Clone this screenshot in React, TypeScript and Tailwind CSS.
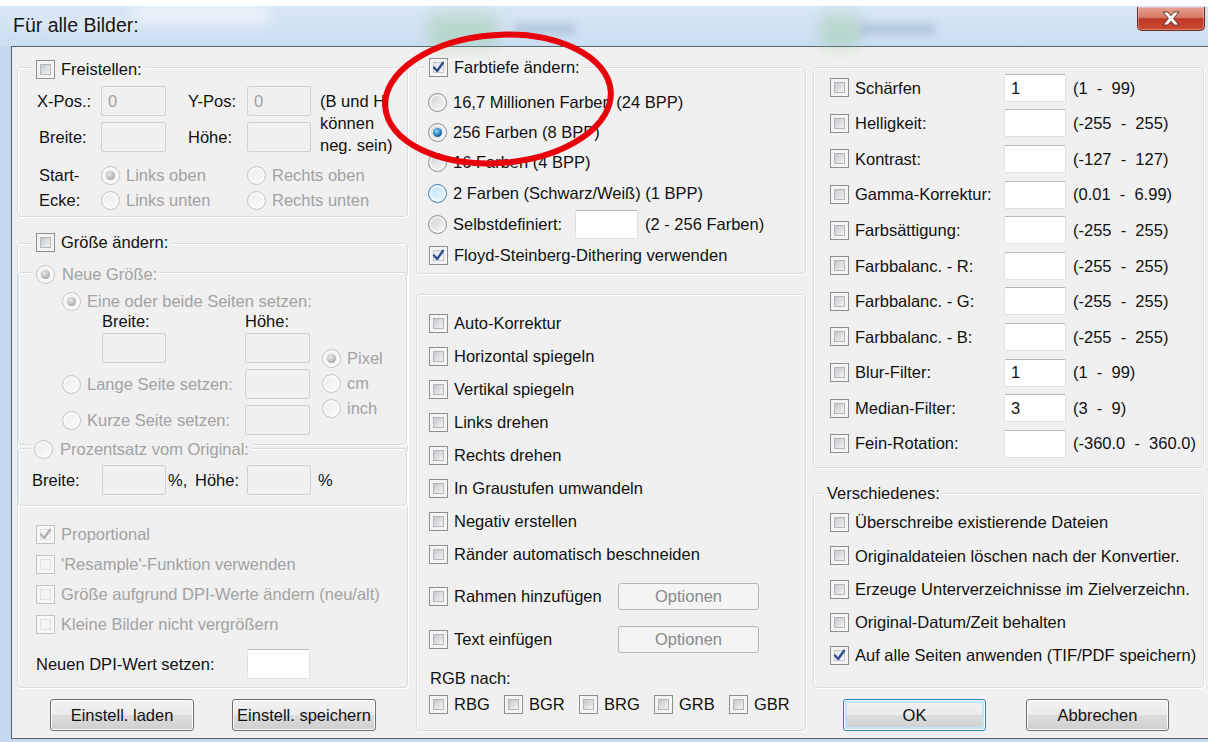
import React from "react";

const dimText = "text-[#a2a2a2]";
const buttonFace = "bg-[linear-gradient(#f2f2f2,#ebebeb_49%,#dddddd_50%,#cfcfcf)]";

function CheckBox({ checked = false, disabled = false }: { checked?: boolean; disabled?: boolean }) {
  const outer = disabled ? "border-[#c4c4c4] bg-[#f7f7f7]" : "border-[#8e8f8f] bg-[#f4f4f4]";
  const inner = disabled
    ? "border-[#e0e0e0] bg-[#f4f4f4]"
    : checked
    ? "border-[#c3c6cb] bg-linear-to-br from-[#e4e5e7] to-[#fbfbfb]"
    : "border-[#b3b6bb] bg-linear-to-br from-[#c4c7cb] to-[#f4f4f4]";
  return (
    <span className={`relative flex h-[19px] w-[19px] shrink-0 border p-[3px] ${outer}`}>
      <span className={`flex-1 border ${inner}`} />
      {checked && (
        <svg viewBox="0 0 19 19" className="absolute -left-px -top-px h-[19px] w-[19px]">
          <path
            d="M5 9.5 L8.2 13 L14 4.8"
            fill="none"
            stroke={disabled ? "#b0b0b0" : "#2f4f93"}
            strokeWidth="2.4"
            strokeLinecap="round"
            strokeLinejoin="round"
          />
        </svg>
      )}
    </span>
  );
}

function Radio({ checked = false, disabled = false, hot = false }: { checked?: boolean; disabled?: boolean; hot?: boolean }) {
  const ring = hot
    ? "border-[#3c7fb1] bg-linear-to-br from-[#bfe3f9] to-[#eef8fe]"
    : disabled
    ? "border-[#c4c4c4] bg-linear-to-br from-[#ececec] to-[#fafafa]"
    : "border-[#8e8f8f] bg-linear-to-br from-[#cfd0d2] to-[#fafafa]";
  const dot = disabled
    ? "bg-[radial-gradient(circle_at_40%_35%,#ececec,#ababab_70%,#8f8f8f)]"
    : "bg-[radial-gradient(circle_at_40%_35%,#9ae0ff,#1d77b4_55%,#0b3f66)]";
  return (
    <span
      className={`flex h-[19px] w-[19px] shrink-0 items-center justify-center rounded-full border shadow-[inset_0_0_0_2px_rgba(255,255,255,0.6)] ${ring}`}
    >
      {checked && <span className={`h-[9px] w-[9px] rounded-full ${dot}`} />}
    </span>
  );
}

function Opt({
  radio = false,
  checked = false,
  disabled = false,
  hot = false,
  className = "",
  children,
}: {
  radio?: boolean;
  checked?: boolean;
  disabled?: boolean;
  hot?: boolean;
  className?: string;
  children: React.ReactNode;
}) {
  return (
    <div className={`flex shrink-0 items-center ${className}`}>
      {radio ? <Radio checked={checked} disabled={disabled} hot={hot} /> : <CheckBox checked={checked} disabled={disabled} />}
      <span className={`ml-[6px] whitespace-nowrap ${disabled ? dimText : ""}`}>{children}</span>
    </div>
  );
}

function Field({ value = "", disabled = false, className = "" }: { value?: string; disabled?: boolean; className?: string }) {
  const skin = disabled
    ? "border-[#cfd0d1] bg-[#f0f0f0] text-[#a2a2a2]"
    : "border-[#dde1e6] border-t-[#b5b8be] bg-white text-[#111]";
  return <span className={`flex shrink-0 items-center rounded-[2px] border pl-[6px] ${skin} ${className}`}>{value}</span>;
}

function Btn({
  children,
  className = "",
  primary = false,
  disabled = false,
}: {
  children: React.ReactNode;
  className?: string;
  primary?: boolean;
  disabled?: boolean;
}) {
  const skin = disabled
    ? "border-[#b3b7ba] bg-[#f4f4f4] text-[#8a8a8a]"
    : primary
    ? `border-[#3c7fb1] ${buttonFace} shadow-[inset_0_0_0_1px_#fff,inset_0_0_0_3px_#bfe5fa]`
    : `border-[#707070] ${buttonFace} shadow-[inset_0_0_0_1px_#fcfcfc]`;
  return <div className={`flex shrink-0 items-center justify-center rounded-[3px] border ${skin} ${className}`}>{children}</div>;
}

function Legend({ className = "", children }: { className?: string; children: React.ReactNode }) {
  return <div className={`absolute flex h-[20px] items-center bg-[#f0f0f0] px-[3px] ${className}`}>{children}</div>;
}

function Group({ className = "", legend, children }: { className?: string; legend?: React.ReactNode; children?: React.ReactNode }) {
  return (
    <div
      className={`relative flex shrink-0 flex-col rounded-[4px] border border-[#d5dfe5] shadow-[inset_1px_1px_0_#fff,1px_1px_0_#fff] ${className}`}
    >
      {legend}
      {children}
    </div>
  );
}

function TitleBar() {
  return (
    <div className="relative flex h-[40px] shrink-0 items-start justify-between bg-linear-to-b from-[#d9e7f5] to-[#cbdef1]">
      {/* windows behind the glass */}
      <div className="absolute left-[130px] top-0 h-[18px] w-[140px] rounded-full bg-white/60 blur-[8px]" />
      <div className="absolute left-[428px] top-[8px] h-[34px] w-[70px] rounded-[6px] bg-[#8cc48a]/35 blur-[7px]" />
      <div className="absolute left-[515px] top-[18px] h-[10px] w-[60px] bg-[#4c6b8c]/25 blur-[4px]" />
      <div className="absolute left-[820px] top-[8px] h-[34px] w-[40px] rounded-[6px] bg-[#8cc48a]/35 blur-[7px]" />
      <div className="absolute left-[860px] top-[18px] h-[10px] w-[75px] bg-[#4c6b8c]/25 blur-[4px]" />
      <span className="relative self-center pl-[13px] text-[19.5px] text-[#161616] [text-shadow:0_0_8px_#fff]">Für alle Bilder:</span>
      <div className="relative mr-[3px] mt-px flex h-[24px] w-[68px] items-center justify-center rounded-b-[5px] border border-t-0 border-[#6e2820] bg-[linear-gradient(#e6a394,#d77867_45%,#bf3725_52%,#cc4c33)] shadow-[inset_0_0_0_1px_rgba(255,255,255,0.3)]">
        <svg width="24" height="17" viewBox="0 0 24 17">
          <path
            d="M4 2h4.8l3.2 3.7L15.2 2H20l-5.5 6.5L20 15h-4.8L12 11.3 8.8 15H4l5.5-6.5z"
            fill="#fff"
            stroke="#5e3630"
            strokeWidth="1"
            strokeLinejoin="round"
          />
        </svg>
      </div>
    </div>
  );
}

function LeftColumn() {
  return (
    <div className="ml-[5px] flex w-[391px] shrink-0 flex-col">
      <Group
        className="h-[150px]"
        legend={
          <Legend className="-top-[9px] left-[15px]">
            <CheckBox />
            <span className="ml-[6px]">Freistellen:</span>
          </Legend>
        }
      >
        <div className="mt-[18px] flex">
          <div className="flex flex-col gap-[6px] pl-[19px]">
            <div className="flex h-[30px] items-center">
              <span className="w-[64px]">X-Pos.:</span>
              <Field disabled value="0" className="h-[30px] w-[65px]" />
              <span className="ml-[22px] w-[59px]">Y-Pos:</span>
              <Field disabled value="0" className="h-[30px] w-[64px]" />
            </div>
            <div className="flex h-[30px] items-center">
              <span className="w-[64px] pl-[2px]">Breite:</span>
              <Field disabled className="h-[30px] w-[65px]" />
              <span className="ml-[22px] w-[59px]">Höhe:</span>
              <Field disabled className="h-[30px] w-[64px]" />
            </div>
          </div>
          <div className="ml-[9px] whitespace-nowrap pt-[4px] leading-[22px]">
            (B und H
            <br />
            können
            <br />
            neg. sein)
          </div>
        </div>
        <div className="mt-[7px] flex pl-[21px]">
          <div className="w-[62px] leading-[25px]">
            Start-
            <br />
            Ecke:
          </div>
          <div className="grid grid-cols-[146px_auto]">
            <Opt radio checked disabled className="h-[25px]">
              Links oben
            </Opt>
            <Opt radio disabled className="h-[25px]">
              Rechts oben
            </Opt>
            <Opt radio disabled className="h-[25px]">
              Links unten
            </Opt>
            <Opt radio disabled className="h-[25px]">
              Rechts unten
            </Opt>
          </div>
        </div>
      </Group>

      <Group
        className="mt-[26px] h-[445px]"
        legend={
          <Legend className="-top-[12px] left-[15px]">
            <CheckBox />
            <span className="ml-[6px]">Größe ändern:</span>
          </Legend>
        }
      >
        <Group
          className="mt-[28px] h-[173px]"
          legend={
            <Legend className="-top-[9px] left-[14px]">
              <Radio checked disabled />
              <span className={`ml-[7px] ${dimText}`}>Neue Größe:</span>
            </Legend>
          }
        >
          <Opt radio checked disabled className="mt-[18px] h-[20px] pl-[43px]">
            Eine oder beide Seiten setzen:
          </Opt>
          <div className="flex h-[20px] items-center">
            <span className="w-[226px] pl-[83px]">Breite:</span>
            <span>Höhe:</span>
          </div>
          <div className="mt-[2px] flex">
            <div className="flex w-[291px] flex-col gap-[6px]">
              <div className="flex h-[30px] items-center">
                <div className="w-[226px] pl-[83px]">
                  <Field disabled className="h-[30px] w-[64px]" />
                </div>
                <Field disabled className="h-[30px] w-[65px]" />
              </div>
              <div className="flex h-[30px] items-center">
                <Opt radio disabled className="w-[226px] pl-[43px]">
                  Lange Seite setzen:
                </Opt>
                <Field disabled className="h-[30px] w-[65px]" />
              </div>
              <div className="flex h-[30px] items-center">
                <Opt radio disabled className="w-[226px] pl-[43px]">
                  Kurze Seite setzen:
                </Opt>
                <Field disabled className="h-[30px] w-[65px]" />
              </div>
            </div>
            <div className="ml-[12px] flex flex-col pt-[13px]">
              <Opt radio checked disabled className="h-[25px]">
                Pixel
              </Opt>
              <Opt radio disabled className="h-[25px]">
                cm
              </Opt>
              <Opt radio disabled className="h-[25px]">
                inch
              </Opt>
            </div>
          </div>
        </Group>

        <Group
          className="mt-[3px] h-[58px]"
          legend={
            <Legend className="-top-[10px] left-[12px]">
              <Radio disabled />
              <span className={`ml-[7px] ${dimText}`}>Prozentsatz vom Original:</span>
            </Legend>
          }
        >
          <div className="mt-[16px] flex h-[30px] items-center pl-[13px]">
            <span className="w-[70px]">Breite:</span>
            <Field disabled className="h-[30px] w-[64px]" />
            <span className="ml-[2px] w-[27px]">%,</span>
            <span className="w-[52px]">Höhe:</span>
            <Field disabled className="h-[30px] w-[64px]" />
            <span className="ml-[7px]">%</span>
          </div>
        </Group>

        <div className="mt-[13px] flex flex-col pl-[18px]">
          <Opt checked disabled className="h-[30px]">
            Proportional
          </Opt>
          <Opt disabled className="h-[30px]">
            'Resample'-Funktion verwenden
          </Opt>
          <Opt disabled className="h-[30px]">
            Größe aufgrund DPI-Werte ändern (neu/alt)
          </Opt>
          <Opt disabled className="h-[30px]">
            Kleine Bilder nicht vergrößern
          </Opt>
        </div>
        <div className="mt-[10px] flex h-[30px] items-center pl-[18px]">
          <span className="w-[211px]">Neuen DPI-Wert setzen:</span>
          <Field className="h-[30px] w-[63px]" />
        </div>
      </Group>

      <div className="mt-[11px] flex">
        <Btn className="ml-[33px] h-[32px] w-[144px]">Einstell. laden</Btn>
        <Btn className="ml-[38px] h-[32px] w-[144px]">Einstell. speichern</Btn>
      </div>
    </div>
  );
}

const transforms = [
  "Auto-Korrektur",
  "Horizontal spiegeln",
  "Vertikal spiegeln",
  "Links drehen",
  "Rechts drehen",
  "In Graustufen umwandeln",
  "Negativ erstellen",
  "Ränder automatisch beschneiden",
];

function MiddleColumn() {
  return (
    <div className="ml-[8px] flex w-[390px] shrink-0 flex-col">
      <Group
        className="h-[207px]"
        legend={
          <Legend className="-top-[11px] left-[9px]">
            <CheckBox checked />
            <span className="ml-[6px]">Farbtiefe ändern:</span>
          </Legend>
        }
      >
        <div className="mt-[19px] flex flex-col pl-[11px]">
          <Opt radio className="h-[30px]">
            16,7 Millionen Farben (24 BPP)
          </Opt>
          <Opt radio checked className="h-[30px]">
            256 Farben (8 BPP)
          </Opt>
          <Opt radio className="h-[31px]">
            16 Farben (4 BPP)
          </Opt>
          <Opt radio hot className="h-[31px]">
            2 Farben (Schwarz/Weiß) (1 BPP)
          </Opt>
          <div className="flex h-[31px] items-center">
            <Opt radio className="w-[147px]">
              Selbstdefiniert:
            </Opt>
            <Field className="h-[29px] w-[63px]" />
            <span className="ml-[7px]">(2 - 256 Farben)</span>
          </div>
          <Opt checked className="h-[31px] pl-px">
            Floyd-Steinberg-Dithering verwenden
          </Opt>
        </div>
      </Group>

      <Group className="mt-[20px] h-[437px]">
        <div className="flex flex-col pl-[12px] pt-[12px]">
          {transforms.map((t) => (
            <Opt key={t} className="h-[33px]">
              {t}
            </Opt>
          ))}
          <div className="flex h-[50px] items-center">
            <Opt className="w-[189px]">Rahmen hinzufügen</Opt>
            <Btn disabled className="h-[27px] w-[141px]">
              Optionen
            </Btn>
          </div>
          <div className="flex h-[36px] items-center">
            <Opt className="w-[189px]">Text einfügen</Opt>
            <Btn disabled className="h-[27px] w-[141px]">
              Optionen
            </Btn>
          </div>
          <div className="mt-[11px] flex h-[20px] items-center pl-px">RGB nach:</div>
          <div className="mt-[6px] flex h-[20px]">
            {["RBG", "BGR", "BRG", "GRB", "GBR"].map((c) => (
              <Opt key={c} className="w-[75px]">
                {c}
              </Opt>
            ))}
          </div>
        </div>
      </Group>
    </div>
  );
}

const filters: [string, string, string][] = [
  ["Schärfen", "1", "(1  -  99)"],
  ["Helligkeit:", "", "(-255  -  255)"],
  ["Kontrast:", "", "(-127  -  127)"],
  ["Gamma-Korrektur:", "", "(0.01  -  6.99)"],
  ["Farbsättigung:", "", "(-255  -  255)"],
  ["Farbbalanc. - R:", "", "(-255  -  255)"],
  ["Farbbalanc. - G:", "", "(-255  -  255)"],
  ["Farbbalanc. - B:", "", "(-255  -  255)"],
  ["Blur-Filter:", "1", "(1  -  99)"],
  ["Median-Filter:", "3", "(3  -  9)"],
  ["Fein-Rotation:", "", "(-360.0  -  360.0)"],
];

const misc: [string, boolean][] = [
  ["Überschreibe existierende Dateien", false],
  ["Originaldateien löschen nach der Konvertier.", false],
  ["Erzeuge Unterverzeichnisse im Zielverzeichn.", false],
  ["Original-Datum/Zeit behalten", false],
  ["Auf alle Seiten anwenden (TIF/PDF speichern)", true],
];

function RightColumn() {
  return (
    <div className="ml-[7px] flex w-[391px] shrink-0 flex-col">
      <Group className="h-[401px]">
        <div className="flex flex-col pl-[16px] pt-[2px]">
          {filters.map(([label, value, range]) => (
            <div key={label} className="flex h-[35.6px] items-center">
              <Opt className="w-[174px]">{label}</Opt>
              <Field value={value} className="h-[28px] w-[62px]" />
              <span className="ml-[7px] whitespace-pre">{range}</span>
            </div>
          ))}
        </div>
      </Group>

      <Group
        className="mt-[25px] h-[195px]"
        legend={<Legend className="-top-[11px] left-[10px]">Verschiedenes:</Legend>}
      >
        <div className="flex flex-col pl-[16px] pt-[12px]">
          {misc.map(([label, on]) => (
            <Opt key={label} checked={on} className="h-[33.25px]">
              {label}
            </Opt>
          ))}
        </div>
      </Group>

      <div className="mt-[11px] flex">
        <Btn primary className="ml-[30px] h-[32px] w-[143px]">
          OK
        </Btn>
        <Btn className="ml-[40px] h-[32px] w-[143px]">Abbrechen</Btn>
      </div>
    </div>
  );
}

export default function App() {
  return (
    <div className="relative flex h-[742px] w-[1208px] flex-col overflow-hidden bg-white font-['Liberation_Sans',Arial,sans-serif] text-[16.5px] leading-none text-[#111]">
      <div className="h-[6px] shrink-0" />
      <div className="flex flex-1 flex-col bg-[#c5d9ee]">
        <TitleBar />
        <div className="ml-[11px] flex h-[693px] shrink-0 items-start border-y border-l border-[#55626f] bg-[#f0f0f0] pt-[20px]">
          <LeftColumn />
          <MiddleColumn />
          <RightColumn />
        </div>
      </div>

      {/* hand-drawn highlight around the colour depth options */}
      <svg className="pointer-events-none absolute left-0 top-0 h-[742px] w-[1208px]" viewBox="0 0 1208 742">
        <ellipse
          cx="498"
          cy="99"
          rx="113"
          ry="64"
          transform="rotate(-4 498 99)"
          fill="none"
          stroke="#e8000b"
          strokeWidth="6"
        />
      </svg>
    </div>
  );
}
